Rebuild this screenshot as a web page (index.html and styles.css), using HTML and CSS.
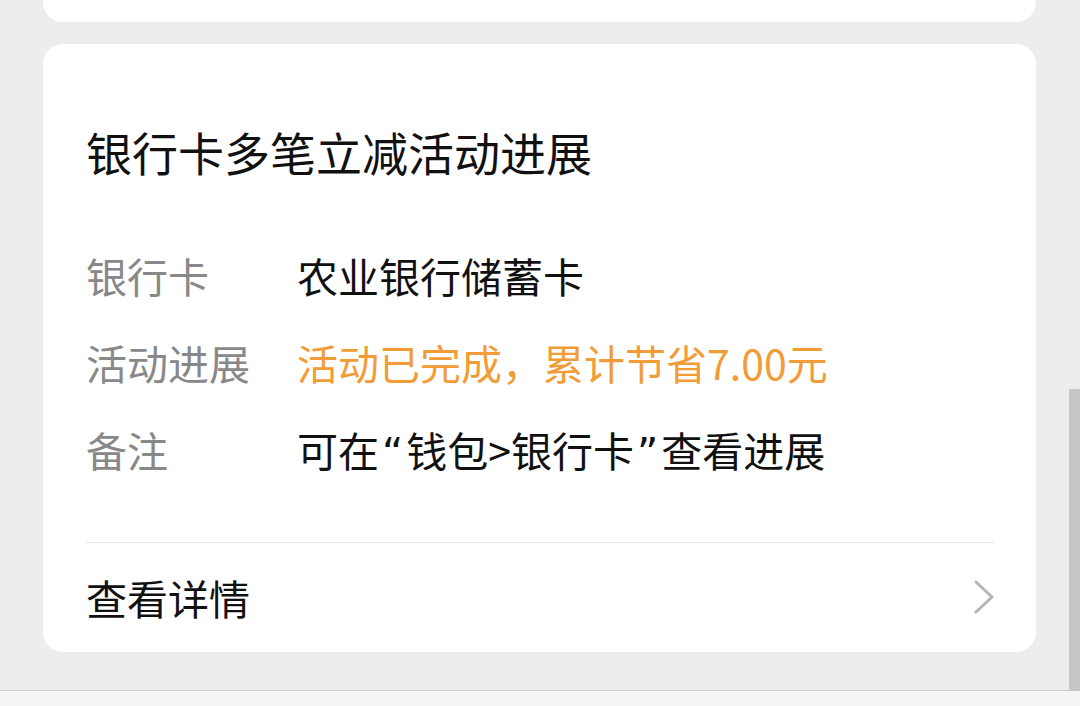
FILE: index.html
```html
<!DOCTYPE html>
<html>
<head>
<meta charset="utf-8">
<link rel="stylesheet" href="styles.css">
</head>
<body>
<div class="page">
	<div class="card card-top"></div>

	<div class="card card-main">
		<h2 class="title">银行卡多笔立减活动进展</h2>

		<div class="rows">
			<div class="row">
				<span class="label">银行卡</span>
				<span class="value">农业银行储蓄卡</span>
			</div>
			<div class="row">
				<span class="label">活动进展</span>
				<span class="value orange">活动已完成，累计节省7.00元</span>
			</div>
			<div class="row">
				<span class="label">备注</span>
				<span class="value">可在<span class="q">“</span>钱包&gt;银行卡<span class="q">”</span>查看进展</span>
			</div>
		</div>

		<div class="more">
			<span>查看详情</span>
			<svg class="chev" width="20" height="34" viewBox="0 0 20 34">
				<path d="M2 2 L18 17 L2 32" fill="none" stroke="#b5b5b5" stroke-width="3" stroke-linecap="round" stroke-linejoin="round"/>
			</svg>
		</div>
	</div>
</div>

<div class="bottom-bar"></div>
<div class="scrollbar"></div>
</body>
</html>
```

FILE: styles.css
```css
body {
  margin: 0;
  background: #ededed;
  font-family: "Noto Sans CJK SC", "Noto Sans", sans-serif;
  height: 706px;
  overflow: hidden;
  display: flex;
  flex-direction: column;
}

.page {
  padding: 0 44px 0 43px;
  display: flex;
  flex-direction: column;
  gap: 22px;
}

.card {
  background: #fff;
  border-radius: 20px;
}

.card-top {
  height: 22px;
  border-top-left-radius: 0;
  border-top-right-radius: 0;
}

.card-main {
  height: 608px;
  box-sizing: border-box;
  padding: 77px 42px 0 43px;
  display: flex;
  flex-direction: column;
}

.title {
  margin: 0;
  font-size: 46px;
  font-weight: normal;
  line-height: 60px;
  color: #111;
}

.rows {
  margin-top: 66px;
  display: flex;
  flex-direction: column;
  gap: 31px;
  padding-bottom: 65px;
  border-bottom: 1px solid #e6e6e6;
}

.row {
  display: flex;
  font-size: 41px;
  line-height: 56px;
}

.label {
  width: 211px;
  color: #888;
  flex: none;
}

.value {
  color: #111;
}

.q {
  font-family: "DejaVu Sans", sans-serif;
  line-height: 1;
  padding: 0 3px;
}

.orange {
  color: #f29c38;
}

.more {
  height: 108px;
  display: flex;
  align-items: center;
  justify-content: space-between;
  font-size: 41px;
  color: #111;
}

.chev {
  display: block;
}

.bottom-bar {
  margin-top: auto;
  height: 15px;
  background: #f5f5f5;
  border-top: 1px solid #cecece;
}

.scrollbar {
  position: absolute;
  right: 0;
  top: 389px;
  width: 11px;
  height: 302px;
  background: #c6c6c6;
}
```
